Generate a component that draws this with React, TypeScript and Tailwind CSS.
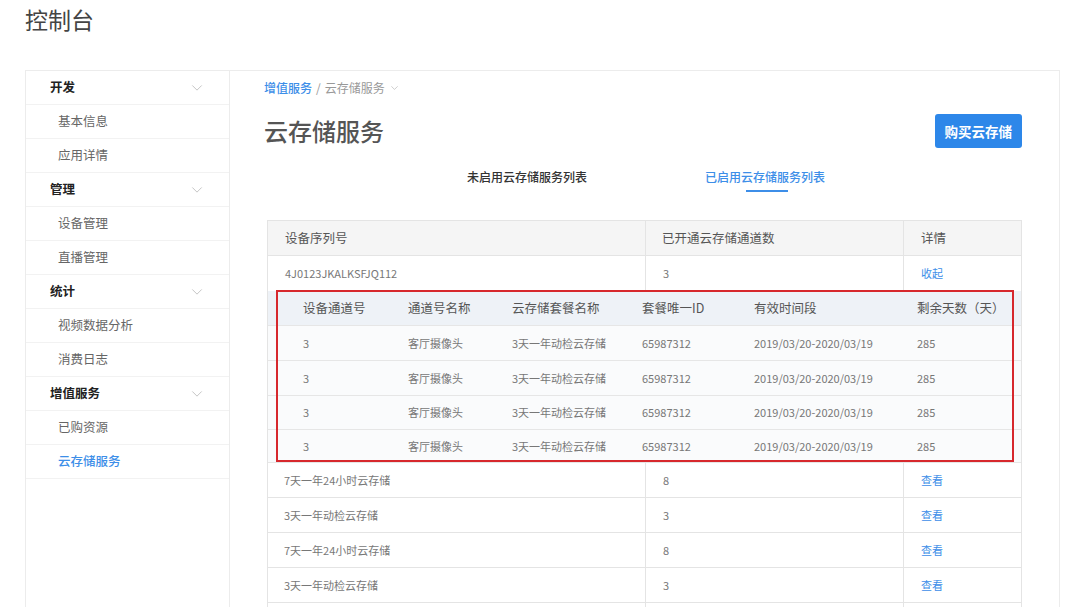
import React from "react";

const font = { fontFamily: '"Noto Sans CJK SC", "Noto Sans", sans-serif' };

function Chevron({ className }: { className?: string }) {
  return (
    <svg viewBox="0 0 12 7" className={className} fill="none" stroke="currentColor" strokeWidth="1">
      <path d="M0.5 0.5 L6 6 L11.5 0.5" />
    </svg>
  );
}

const menu = [
  { title: "开发", items: ["基本信息", "应用详情"] },
  { title: "管理", items: ["设备管理", "直播管理"] },
  { title: "统计", items: ["视频数据分析", "消费日志"] },
  { title: "增值服务", items: ["已购资源", "云存储服务"] },
];

const channels = [
  { h: "h-[35px]" },
  { h: "h-[35px]" },
  { h: "h-[34px]" },
  { h: "h-[33px]" },
];

// the last row is cut off by the window, so it shows only its borders
const plans = [
  { name: "7天一年24小时云存储", n: "8", link: "查看" },
  { name: "3天一年动检云存储", n: "3", link: "查看" },
  { name: "7天一年24小时云存储", n: "8", link: "查看" },
  { name: "3天一年动检云存储", n: "3", link: "查看" },
  { name: "", n: "", link: "" },
];

function Sidebar() {
  return (
    <aside className="w-[204px] shrink-0 border-r border-[#ececec]">
      {menu.map((g) => (
        <div key={g.title}>
          <div className="flex h-[34px] items-center justify-between border-b border-[#f2f2f2] pl-[24px] pr-[26px]">
            <span className="text-[12.5px] font-bold text-[#222]">{g.title}</span>
            <Chevron className="h-[6px] w-[12px] text-[#bcbcbc]" />
          </div>
          {g.items.map((it) => (
            <div
              key={it}
              className={`flex h-[34px] items-center border-b border-[#f2f2f2] pl-[32px] text-[12.5px] ${
                it === "云存储服务" ? "font-medium text-[#3d8ee8]" : "text-[#666]"
              }`}
            >
              {it}
            </div>
          ))}
        </div>
      ))}
    </aside>
  );
}

function ChannelTable() {
  const cols = "grid grid-cols-[140px_104px_130px_112px_163px_1fr]";
  return (
    <div className="relative">
      <div className={`${cols} h-[35px] items-center border-b border-[#e6e6e6] bg-[#eef2f7] text-[12.5px] text-[#555]`}>
        <div className="pl-[35px]">设备通道号</div>
        <div>通道号名称</div>
        <div>云存储套餐名称</div>
        <div>套餐唯一ID</div>
        <div>有效时间段</div>
        <div>剩余天数（天）</div>
      </div>
      {channels.map((r, i) => (
        <div
          key={i}
          className={`${cols} ${r.h} items-center border-b border-[#e6e6e6] bg-[#fafbfc] text-[11px] text-[#777]`}
        >
          <div className="pl-[35px]">3</div>
          <div>客厅摄像头</div>
          <div>3天一年动检云存储</div>
          <div>65987312</div>
          <div>2019/03/20-2020/03/19</div>
          <div>285</div>
        </div>
      ))}
      <div className="pointer-events-none absolute bottom-[1px] left-[8px] right-[7px] top-[-1px] border-2 border-[#d7282d]" />
    </div>
  );
}

function StorageTable() {
  const cols = "grid grid-cols-[377px_258px_1fr]";
  return (
    <div className="border-x border-t border-[#e4e4e4]">
      <div className={`${cols} h-[35px] items-center border-b border-[#e4e4e4] bg-[#f5f5f5] text-[12.5px] text-[#555]`}>
        <div className="pl-[17px]">设备序列号</div>
        <div className="flex h-full items-center border-l border-[#e4e4e4] pl-[16px]">已开通云存储通道数</div>
        <div className="flex h-full items-center border-l border-[#e4e4e4] pl-[17px]">详情</div>
      </div>
      <div className={`${cols} h-[35px] items-center text-[11px] text-[#777]`}>
        <div className="pl-[17px]">4J0123JKALKSFJQ112</div>
        <div className="flex h-full items-center border-l border-[#e4e4e4] pl-[17px]">3</div>
        <div className="flex h-full items-center border-l border-[#e4e4e4] pl-[17px] text-[#3d8ee8]">收起</div>
      </div>
      <ChannelTable />
      {plans.map((p, i) => (
        <div key={i} className={`${cols} h-[35px] items-center border-b border-[#e4e4e4] text-[11px] text-[#777]`}>
          <div className="pl-[16px]">{p.name}</div>
          <div className="flex h-full items-center border-l border-[#e4e4e4] pl-[17px]">{p.n}</div>
          <div className="flex h-full items-center border-l border-[#e4e4e4] pl-[17px] text-[#3d8ee8]">{p.link}</div>
        </div>
      ))}
    </div>
  );
}

export default function App() {
  return (
    <main className="h-[607px] overflow-hidden bg-white" style={font}>
      <div className="flex h-[70px] items-start pl-[25px] pt-[2px]">
        <h1 className="text-[23px] text-[#444]">控制台</h1>
      </div>
      <div className="ml-[25px] mr-[20px] flex min-h-[600px] border border-[#ececec]">
        <Sidebar />
        <section className="flex-1 pl-[34px] pr-[37px]">
          <div className="flex h-[33px] items-center gap-[4px] text-[12px] text-[#999]">
            <span className="font-medium text-[#3d8ee8]">增值服务</span>
            <span>/</span>
            <span>云存储服务</span>
            <Chevron className="ml-[2px] h-[4px] w-[7px] text-[#aaa]" />
          </div>
          <div className="mt-[7px] flex h-[40px] items-center justify-between">
            <h2 className="text-[24px] font-medium text-[#555]">云存储服务</h2>
            <button className="h-[34px] rounded-[3px] bg-[#2d87e9] px-[10px] text-[13.5px] font-bold text-white">
              购买云存储
            </button>
          </div>
          <div className="mt-[8px] flex h-[36px]">
            <div className="flex w-[526px] justify-center">
              <div className="flex items-center text-[12px] font-medium text-[#333]">未启用云存储服务列表</div>
            </div>
            <div className="relative flex items-center text-[12px] font-medium text-[#3d8ee8]">
              <span className="-ml-[85px]">已启用云存储服务列表</span>
              <div className="absolute bottom-[3px] left-[-44px] h-[2px] w-[42px] bg-[#3d8ee8]" />
            </div>
          </div>
          <div className="ml-[3px] mt-[25px]">
            <StorageTable />
          </div>
        </section>
      </div>
    </main>
  );
}
